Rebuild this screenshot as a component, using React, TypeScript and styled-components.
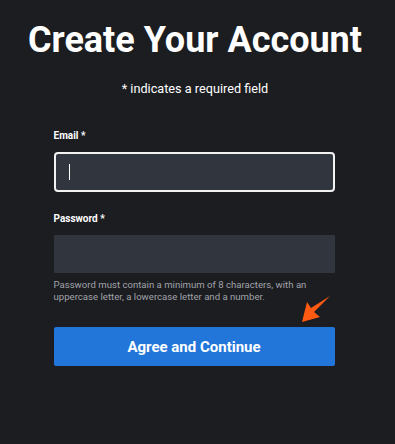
import React from "react";
import styled, { createGlobalStyle } from "styled-components";

const Global = createGlobalStyle`
  html, body {
    margin: 0;
    padding: 0;
    background: #1c1d21;
  }
  body {
    font-family: Roboto, "Liberation Sans", sans-serif;
    color: #fff;
  }
`;

const Page = styled.div`
  width: 395px;
  height: 444px;
  background: #1c1d21;
  display: flex;
  flex-direction: column;
  align-items: center;
  overflow: hidden;
`;

const Title = styled.h1`
  margin: 19px 0 0 -5px;
  font-size: 36px;
  line-height: 43px;
  font-weight: 700;
  color: #fff;
`;

const Note = styled.p`
  margin: 19px 0 0 -5px;
  font-size: 12.7px;
  line-height: 16px;
  color: #fff;
`;

const Form = styled.form`
  width: 281px;
  margin: 33px 0 0 -7px;
  display: flex;
  flex-direction: column;
`;

const Label = styled.label`
  font-size: 10px;
  line-height: 12px;
  font-weight: 700;
  color: #fff;
  margin-bottom: 10px;
`;

const Input = styled.div<{ focused?: boolean }>`
  box-sizing: border-box;
  height: ${({ focused }) => (focused ? "40px" : "38px")};
  background: #31363e;
  border: ${({ focused }) => (focused ? "2px solid #f2f2f2" : "none")};
  border-radius: ${({ focused }) => (focused ? "4px" : "1px")};
  display: flex;
  align-items: center;
  padding-left: 13px;
`;

const Caret = styled.span`
  width: 1px;
  height: 16px;
  background: #fff;
`;

const Field = styled.div<{ gap?: number }>`
  display: flex;
  flex-direction: column;
  margin-top: ${({ gap }) => gap ?? 0}px;
`;

const Help = styled.p`
  margin: 6px 0 0;
  font-size: 9.6px;
  line-height: 11.5px;
  color: #a0a3a9;
`;

const ButtonWrap = styled.div`
  position: relative;
  margin-top: 25px;
`;

const Button = styled.button`
  width: 100%;
  height: 39px;
  border: none;
  border-radius: 2px;
  background: #2276d9;
  color: #fff;
  font-family: Roboto, "Liberation Sans", sans-serif;
  font-size: 15px;
  font-weight: 700;
  cursor: pointer;
`;

const Arrow = styled.svg`
  position: absolute;
  right: 2px;
  top: -32px;
`;

export default function App() {
  return (
    <Page>
      <Global />
      <Title>Create Your Account</Title>
      <Note>* indicates a required field</Note>
      <Form onSubmit={(e) => e.preventDefault()}>
        <Field>
          <Label>Email *</Label>
          <Input focused>
            <Caret />
          </Input>
        </Field>
        <Field gap={21}>
          <Label>Password *</Label>
          <Input />
          <Help>
            Password must contain a minimum of 8 characters, with an uppercase
            letter, a lowercase letter and a number.
          </Help>
        </Field>
        <ButtonWrap>
          <Arrow width="32" height="30" viewBox="0 0 32 30">
            <path
              d="M1 27 L6 7 L10 13 L29 1 L13 17 L19 22 Z"
              fill="#ff5a12"
            />
          </Arrow>
          <Button type="submit">Agree and Continue</Button>
        </ButtonWrap>
      </Form>
    </Page>
  );
}
